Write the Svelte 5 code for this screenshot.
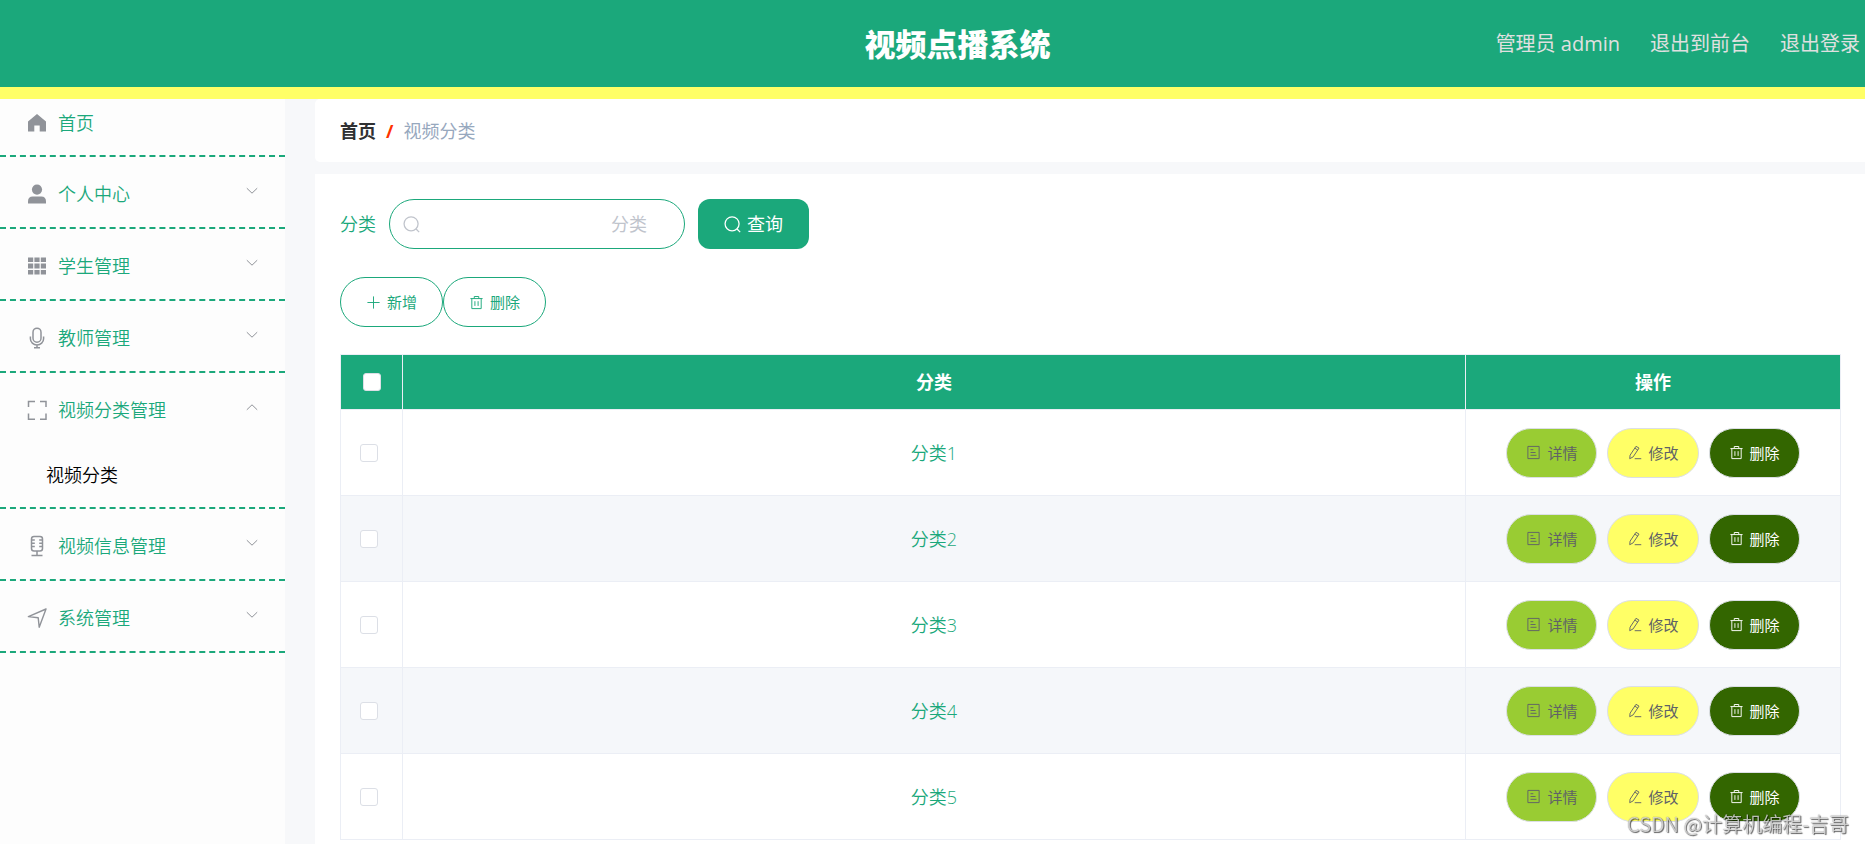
<script lang="ts">
  type MenuItem = {
    label: string;
    icon: string;
    children?: string[];
    open?: boolean;
  };

  let menus = $state<MenuItem[]>([
    { label: '个人中心', icon: 'user', children: [] },
    { label: '学生管理', icon: 'grid', children: [] },
    { label: '教师管理', icon: 'microphone', children: [] },
    { label: '视频分类管理', icon: 'fullscreen', children: ['视频分类'], open: true },
    { label: '视频信息管理', icon: 'mic', children: [] },
    { label: '系统管理', icon: 'position', children: [] }
  ]);

  let rows = $state(
    ['分类1', '分类2', '分类3', '分类4', '分类5'].map((name) => ({ name, checked: false }))
  );

  let keyword = $state('');

  function toggleMenu(item: MenuItem) {
    item.open = !item.open;
  }

  function toggleAll(e: Event) {
    const checked = (e.target as HTMLInputElement).checked;
    rows.forEach((row) => (row.checked = checked));
  }
</script>

{#snippet menuIcon(name: string)}
  <svg class="menu-icon" viewBox="0 0 24 24" aria-hidden="true">
    {#if name === 'home'}
      <path fill="currentColor" d="M12 3 3 10.4V20.5h6.3v-6h5.4v6H21V10.4z" />
    {:else if name === 'user'}
      <circle cx="12" cy="7.6" r="5.1" fill="currentColor" />
      <path fill="currentColor" d="M3 21.5v-2.3c0-3 1.8-4.7 4.6-4.7h8.8c2.8 0 4.6 1.7 4.6 4.7v2.3z" />
    {:else if name === 'grid'}
      <path
        fill="currentColor"
        d="M3 3.5h5.2v4.6H3zM9.4 3.5h5.2v4.6H9.4zM15.8 3.5H21v4.6h-5.2zM3 9.4h5.2v5.2H3zM9.4 9.4h5.2v5.2H9.4zM15.8 9.4H21v5.2h-5.2zM3 16h5.2v4.6H3zM9.4 16h5.2v4.6H9.4zM15.8 16H21v4.6h-5.2z"
      />
    {:else if name === 'microphone'}
      <g fill="none" stroke="currentColor" stroke-width="1.5">
        <rect x="8" y="2.2" width="8" height="14" rx="4" />
        <path d="M5.4 10.5v2.2a6.6 6.2 0 0 0 13.2 0v-2.2M12 19v2.6M9 21.8h6" />
      </g>
    {:else if name === 'fullscreen'}
      <path
        fill="none"
        stroke="currentColor"
        stroke-width="1.5"
        d="M3.5 9V3.5H10M15 3.5h6V9M21 15.5v5.7h-6M10 21.2H3.5v-5.7"
      />
    {:else if name === 'mic'}
      <g fill="none" stroke="currentColor" stroke-width="1.5">
        <rect x="6.5" y="2.5" width="11" height="14.5" rx="2.5" />
        <path d="M6.5 6h3.3M6.5 9.3h3.3M6.5 12.6h3.3M17.5 6h-3.3M17.5 9.3h-3.3M17.5 12.6h-3.3M12 17v4M6.5 21.4h11" />
      </g>
    {:else if name === 'position'}
      <path
        fill="none"
        stroke="currentColor"
        stroke-width="1.4"
        stroke-linejoin="round"
        d="M21 3 3.4 10.6l9.8 1.2 1 9.4z"
      />
    {/if}
  </svg>
{/snippet}

{#snippet icon(name: string)}
  <svg class="icon" viewBox="0 0 16 16" fill="none" stroke="currentColor" aria-hidden="true">
    {#if name === 'search'}
      <circle cx="7.6" cy="7.4" r="6.6" stroke-width="1.2" />
      <path d="m12.3 12.2 2.9 3" stroke-width="1.2" />
    {:else if name === 'plus'}
      <path d="M8 1.5v13M1.5 8h13" />
    {:else if name === 'delete'}
      <path d="M1.5 3.8h13M3 3.8v10.7h10V3.8M5.6 3.6V1.6h4.8v2M6.3 6.6v5M9.7 6.6v5" />
    {:else if name === 'document'}
      <path d="M2 1.5h12v13H2zM4.8 5h3M4.8 8h5.4M4.8 11h6.4" />
    {:else if name === 'edit'}
      <path d="m9.6 1.4 3.2 1.9-6.3 9.4-3.6 1.9.4-3.8zM8.4 3.4l3.1 2M8.2 14.6h7" />
    {/if}
  </svg>
{/snippet}

<div class="layout">
  <header class="navbar">
    <h1 class="title">视频点播系统</h1>
    <nav class="user-nav">
      <span>管理员 admin</span>
      <a href="#front">退出到前台</a>
      <a href="#logout">退出登录</a>
    </nav>
  </header>

  <div class="container">
    <aside class="sidebar">
      <div class="menu-item">
        <a class="menu-title home" href="#home">
          {@render menuIcon('home')}
          <span>首页</span>
        </a>
      </div>
      {#each menus as item}
        <div class="menu-item">
          <button class="menu-title" aria-expanded={!!item.open} onclick={() => toggleMenu(item)}>
            {@render menuIcon(item.icon)}
            <span>{item.label}</span>
            <svg class="arrow" class:open={item.open} viewBox="0 0 12 8" aria-hidden="true">
              <path d="m.8 1.2 5.2 5 5.2-5" fill="none" stroke="currentColor" />
            </svg>
          </button>
          {#if item.open}
            {#each item.children ?? [] as child}
              <a class="sub-item" href="#category">{child}</a>
            {/each}
          {/if}
        </div>
      {/each}
    </aside>

    <main class="main">
      <nav class="breadcrumb" aria-label="breadcrumb">
        <a href="#home">首页</a>
        <span class="separator">/</span>
        <span class="current">视频分类</span>
      </nav>

      <section class="content">
        <form class="search-form" onsubmit={(e) => e.preventDefault()}>
          <label for="keyword">分类</label>
          <div class="search-input">
            {@render icon('search')}
            <input id="keyword" type="text" placeholder="分类" bind:value={keyword} />
          </div>
          <button class="btn-search" type="submit">
            {@render icon('search')}
            <span>查询</span>
          </button>
        </form>

        <div class="toolbar">
          <button class="btn btn-plain">{@render icon('plus')}<span>新增</span></button>
          <button class="btn btn-plain">{@render icon('delete')}<span>删除</span></button>
        </div>

        <table class="table">
          <thead>
            <tr>
              <th class="col-check">
                <input type="checkbox" aria-label="全选" onchange={toggleAll} />
              </th>
              <th>分类</th>
              <th class="col-action">操作</th>
            </tr>
          </thead>
          <tbody>
            {#each rows as row}
              <tr>
                <td class="col-check">
                  <input type="checkbox" aria-label={row.name} bind:checked={row.checked} />
                </td>
                <td>{row.name}</td>
                <td class="col-action">
                  <div class="actions">
                    <button class="btn btn-detail">{@render icon('document')}<span>详情</span></button>
                    <button class="btn btn-edit">{@render icon('edit')}<span>修改</span></button>
                    <button class="btn btn-delete">{@render icon('delete')}<span>删除</span></button>
                  </div>
                </td>
              </tr>
            {/each}
          </tbody>
        </table>
      </section>
    </main>
  </div>

  <div class="watermark">CSDN @计算机编程-吉哥</div>
</div>

<style>
  :global(body) {
    margin: 0;
  }

  .layout {
    --green: #1ba87b;
    --border: #ebeef5;
    display: flex;
    flex-direction: column;
    height: 100vh;
    overflow: hidden;
    background: #f7f8fa;
    color: var(--green);
    font-family: 'Open Sans', 'Noto Sans CJK SC', sans-serif;
    font-size: 18px;
    font-weight: 350;
    line-height: 24px;
  }

  .layout * {
    box-sizing: border-box;
  }

  a {
    color: inherit;
    text-decoration: none;
  }

  button,
  input {
    font: inherit;
  }

  button {
    cursor: pointer;
  }

  /* header */
  .navbar {
    display: grid;
    grid-template-columns: 1fr auto 1fr;
    align-items: center;
    flex: none;
    height: 99px;
    padding: 0 5px 0 55px;
    background: var(--green);
    border-bottom: 12px solid #ffff66;
  }

  .title {
    grid-column: 2;
    margin: 0;
    font-size: 31px;
    font-weight: 900;
    line-height: 40px;
    color: #fff;
  }

  .user-nav {
    display: flex;
    justify-content: flex-end;
    gap: 30px;
    font-size: 20px;
    font-weight: 400;
    color: #e0e0e0;
    white-space: nowrap;
  }

  .container {
    display: flex;
    flex: 1;
    min-height: 0;
  }

  /* sidebar */
  .sidebar {
    flex: none;
    width: 285px;
    background: #fdfdfd;
    overflow-y: auto;
    scrollbar-width: none;
  }

  .menu-item {
    border-bottom: 2px dashed var(--green);
  }

  .menu-title {
    display: flex;
    align-items: center;
    gap: 9px;
    width: 100%;
    height: 70px;
    padding: 4px 27px 0 25px;
    border: 0;
    background: none;
    color: var(--green);
    text-align: left;
  }

  .menu-title.home {
    height: 56px;
    padding-top: 0;
    padding-bottom: 8px;
  }

  .menu-icon {
    flex: none;
    width: 24px;
    height: 24px;
    color: #909399;
  }

  .arrow {
    width: 12px;
    height: 8px;
    margin-left: auto;
    margin-bottom: 6px;
    color: #909399;
  }

  .arrow.open {
    transform: rotate(180deg);
  }

  .sub-item {
    display: block;
    height: 64px;
    padding-left: 46px;
    line-height: 64px;
    color: #000;
  }

  /* main */
  .main {
    display: flex;
    flex-direction: column;
    flex: 1;
    gap: 12px;
    min-width: 0;
    padding-left: 30px;
    overflow-y: auto;
    scrollbar-width: none;
  }

  .breadcrumb {
    display: flex;
    align-items: center;
    flex: none;
    gap: 10px;
    height: 63px;
    padding: 0 25px;
    border-radius: 5px 0 0 5px;
    background: #fff;
  }

  .breadcrumb a {
    font-weight: 700;
    color: #303133;
  }

  .separator {
    font-weight: 700;
    color: #ff3300;
  }

  .current {
    color: #97a8be;
    font-weight: 400;
  }

  .content {
    flex: 1 0 auto;
    padding: 25px 24px 0 25px;
    background: #fff;
  }

  .search-form {
    display: flex;
    align-items: center;
    gap: 13px;
  }

  .search-input {
    display: flex;
    align-items: center;
    width: 296px;
    height: 50px;
    padding: 0 37px 0 13px;
    border: 1px solid var(--green);
    border-radius: 25px;
    color: #c0c4cc;
  }

  .search-input input {
    flex: 1;
    min-width: 0;
    padding: 0;
    border: 0;
    outline: none;
    background: none;
    color: var(--green);
    text-align: right;
  }

  .search-input input::placeholder {
    color: #c0c4cc;
    font-weight: 400;
    opacity: 1;
  }

  .icon {
    flex: none;
    width: 15px;
    height: 15px;
  }

  .search-form .icon {
    width: 17px;
    height: 17px;
  }

  .btn-search {
    display: flex;
    align-items: center;
    gap: 6px;
    height: 50px;
    padding: 0 26px;
    border: 0;
    border-radius: 12px;
    background: var(--green);
    color: #fff;
    font-weight: 400;
  }

  .toolbar {
    display: flex;
    margin: 28px 0 27px;
  }

  .btn {
    display: flex;
    align-items: center;
    gap: 6px;
    height: 50px;
    padding: 0 19px;
    border: 1px solid #dcdfe6;
    border-radius: 25px;
    font-size: 15px;
    font-weight: 400;
    white-space: nowrap;
  }

  .btn-plain {
    padding: 0 25px;
    border-color: var(--green);
    background: #fff;
    color: var(--green);
  }

  .btn-detail {
    background: #99cc33;
    color: #606266;
  }

  .btn-edit {
    background: #ffff66;
    color: #606266;
  }

  .btn-delete {
    background: #336600;
    color: #fff;
  }

  /* table */
  .table {
    width: 100%;
    border: 1px solid var(--border);
    border-width: 1px 0 0 1px;
    border-spacing: 0;
    table-layout: fixed;
    text-align: center;
  }

  .table th,
  .table td {
    padding: 0;
    border: 1px solid var(--border);
    border-width: 0 1px 1px 0;
  }

  .table th {
    height: 55px;
    background: var(--green);
    color: #fff;
    font-weight: 700;
  }

  .table td {
    height: 86px;
  }

  .table tbody tr:nth-child(even) {
    background: #f5f7fa;
  }

  .col-check {
    width: 62px;
  }

  .table td.col-check {
    padding-right: 5px;
  }

  .col-action {
    width: 375px;
  }

  .col-check input {
    display: block;
    width: 18px;
    height: 18px;
    margin: 0 auto;
    appearance: none;
    border: 1px solid #dcdfe6;
    border-radius: 3px;
    background: #fff;
  }

  .col-check input:checked {
    background: var(--green);
  }

  .actions {
    display: flex;
    justify-content: center;
    gap: 10px;
  }

  .watermark {
    position: fixed;
    right: 16px;
    bottom: 8px;
    font-family: 'Noto Sans CJK SC', sans-serif;
    font-size: 20px;
    color: rgba(255, 255, 255, 0.7);
    text-shadow: 1px 1px 1px rgba(0, 0, 0, 0.6), 0 0 1px rgba(0, 0, 0, 0.6);
    pointer-events: none;
  }
</style>
